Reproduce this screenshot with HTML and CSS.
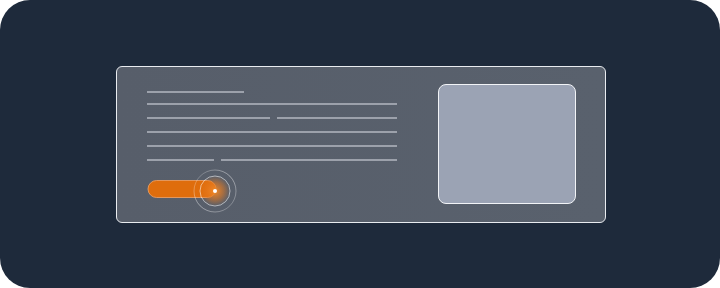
FILE: index.html
```html
<!DOCTYPE html>
<html lang="en">
  <head>
    <meta charset="UTF-8" />
    <meta name="viewport" content="width=device-width, initial-scale=1.0" />
    <title>Card skeleton</title>
    <link rel="stylesheet" href="styles.css">
  </head>
  <body>
    <div class="stage">
      <div class="card">
        <div class="text-col">
          <div class="line line-short"></div>
          <div class="line"></div>
          <div class="line-row">
            <div class="line seg-a"></div>
            <div class="line seg-b"></div>
          </div>
          <div class="line"></div>
          <div class="line"></div>
          <div class="line-row">
            <div class="line seg-c"></div>
            <div class="line seg-d"></div>
          </div>

          <!-- toggle with knob rings -->
          <svg class="toggle" width="96" height="46" viewBox="0 0 96 46">
            <defs>
              <radialGradient id="glow" cx="0.5" cy="0.5" r="0.5">
                <stop offset="0" stop-color="#f08a2a" stop-opacity="1" />
                <stop offset="0.55" stop-color="#e87a1e" stop-opacity="0.55" />
                <stop offset="1" stop-color="#e87a1e" stop-opacity="0" />
              </radialGradient>
              <linearGradient id="ringFade" x1="0" y1="0" x2="1" y2="1">
                <stop offset="0" stop-color="#ffffff" stop-opacity="0.15" />
                <stop offset="0.5" stop-color="#ffffff" stop-opacity="0.45" />
                <stop offset="1" stop-color="#ffffff" stop-opacity="0.2" />
              </linearGradient>
            </defs>
            <rect x="1" y="12.5" width="68" height="17" rx="8.5" fill="#df6d0c" stroke="#f4a566" stroke-width="0.8" />
            <circle cx="68" cy="23" r="15" fill="url(#glow)" />
            <circle cx="68" cy="23" r="15" fill="none" stroke="#ffffff" stroke-opacity="0.55" stroke-width="1" />
            <circle cx="68" cy="23" r="21" fill="none" stroke="url(#ringFade)" stroke-width="1" />
            <circle cx="68" cy="23" r="2" fill="#ffffff" />
          </svg>
        </div>
        <div class="thumb"></div>
      </div>
    </div>
  </body>
</html>
```

FILE: styles.css
```css
html,
body {
  margin: 0;
  background: #ffffff;
}

.stage {
  width: 720px;
  height: 288px;
  background-color: #1e2a3b;
  border-radius: 30px;
  display: flex;
  align-items: flex-start;
  padding: 66px 0 0 116px;
  box-sizing: border-box;
}

.card {
  width: 490px;
  height: 157px;
  box-sizing: border-box;
  display: flex;
  gap: 41px;
  padding: 17px 29px 0 30px;
  border: 1px solid #e9ecf0;
  border-radius: 6px;
  background: linear-gradient(to right, #575e6a, #59616d);
}

.text-col {
  width: 250px;
  display: flex;
  flex-direction: column;
  padding-top: 7px;
}

.line {
  height: 2px;
  background-color: #9ca1ab;
  margin-bottom: 12px;
}

.line-short {
  width: 97px;
  margin-bottom: 10px;
}

.line-row {
  display: flex;
  gap: 7px;
}

.seg-a {
  width: 123px;
}

.seg-b {
  flex: 1;
}

.seg-c {
  width: 67px;
}

.seg-d {
  flex: 1;
}

.line-row:last-of-type .line {
  margin-bottom: 0;
}

.toggle {
  display: block;
  margin-top: 7px;
}

.thumb {
  width: 138px;
  height: 120px;
  box-sizing: border-box;
  background-color: #9ba3b4;
  border: 1px solid #f2f4f7;
  border-radius: 8px;
}
```
